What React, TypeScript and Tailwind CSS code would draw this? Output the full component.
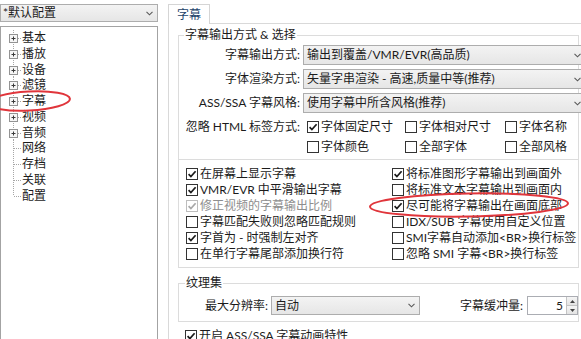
import React from "react";

function Chevron() {
  return (
    <svg width="7" height="5" viewBox="0 0 7 5" className="shrink-0">
      <path d="M0.5 0.8 L3.5 3.8 L6.5 0.8" stroke="#5a5a5a" strokeWidth="1.1" fill="none" />
    </svg>
  );
}

function Select({ text, w, h = "h-[20px]" }: { text: string; w: string; h?: string }) {
  return (
    <div
      className={`${w} ${h} shrink-0 border border-[#adadad] bg-linear-to-b from-[#f3f3f3] to-[#e6e6e6] flex items-center justify-between pl-[3px] pr-[4px] whitespace-nowrap`}
    >
      <span>{text}</span>
      <Chevron />
    </div>
  );
}

function Check({ checked, disabled, label }: { checked?: boolean; disabled?: boolean; label: string }) {
  return (
    <div className="flex items-center h-[16px] gap-[2px] whitespace-nowrap">
      <span
        className={`w-[12px] h-[12px] shrink-0 border ${disabled ? "border-[#bdbdbd]" : "border-[#333333]"} bg-white flex items-center justify-center`}
      >
        {checked && (
          <svg width="10" height="10" viewBox="0 0 10 10">
            <path
              d="M1.6 5.2 L3.9 7.6 L8.6 2.2"
              stroke={disabled ? "#a8a8a8" : "#1a1a1a"}
              strokeWidth="1.7"
              fill="none"
            />
          </svg>
        )}
      </span>
      <span className={disabled ? "text-[#8e8e8e]" : ""}>{label}</span>
    </div>
  );
}

function TreeRow({ label, expandable, last }: { label: string; expandable?: boolean; last?: boolean }) {
  return (
    <div className="flex items-center h-[15.8px]">
      <svg width="21" height="16" className="shrink-0">
        <line x1="12.5" y1="0" x2="12.5" y2={last ? 8 : 16} stroke="#a6a6a6" strokeDasharray="1 1" />
        <line x1="13" y1="8.5" x2="21" y2="8.5" stroke="#a6a6a6" strokeDasharray="1 1" />
        {expandable && (
          <>
            <rect x="8.5" y="4.5" width="8" height="8" fill="#f6f6f6" stroke="#939393" />
            <path d="M10.5 8.5 H14.5 M12.5 6.5 V10.5" stroke="#3a3a3a" />
          </>
        )}
      </svg>
      <span>{label}</span>
    </div>
  );
}

export default function App() {
  return (
    <div className="w-[581px] h-[339px] overflow-hidden bg-white relative flex text-[12px] leading-[16px] text-[#1b1b1b] font-['Lato','Noto_Sans_CJK_SC',sans-serif]">
      {/* Left column */}
      <div className="w-[158px] shrink-0 flex flex-col pt-[4px]">
        <div className="h-[20px] border border-[#adadad] bg-linear-to-b from-[#f3f3f3] to-[#e6e6e6] flex items-center justify-between pl-[2px] pr-[4px]">
          <span>*默认配置</span>
          <Chevron />
        </div>
        <div className="mt-[4px] h-[330px] shrink-0 border border-[#a3a3a3] pt-[3px] bg-white">
          <TreeRow label="基本" expandable />
          <TreeRow label="播放" expandable />
          <TreeRow label="设备" expandable />
          <TreeRow label="滤镜" expandable />
          <TreeRow label="字幕" expandable />
          <TreeRow label="视频" expandable />
          <TreeRow label="音频" expandable />
          <TreeRow label="网络" />
          <TreeRow label="存档" />
          <TreeRow label="关联" />
          <TreeRow label="配置" last />
        </div>
      </div>

      {/* Right column */}
      <div className="ml-[10px] flex flex-col flex-1 min-w-0">
        <div className="h-[23px] shrink-0 flex items-end">
          <div className="relative z-10 w-[42px] h-[20px] mb-[-1px] border border-b-0 border-[#d5d5d5] bg-white flex items-center justify-center text-[#23436b]">
            字幕
          </div>
        </div>
        <div className="flex-1 border-l border-t border-[#d9d9d9] bg-white pl-[9px] flex flex-col">
          {/* Group 1 */}
          <fieldset className="mt-[3px] w-[401px] min-w-0 shrink-0 border border-[#dcdcdc] pb-[4px]">
            <legend className="ml-[5px] px-[1px] leading-[16px]">字幕输出方式 &amp; 选择</legend>
            <div className="grid grid-cols-[121px_auto] gap-x-[3px] gap-y-[4px] mt-[2px] items-center">
              <div className="text-right whitespace-nowrap">字幕输出方式:</div>
              <Select w="w-[283px]" text="输出到覆盖/VMR/EVR(高品质)" />
              <div className="text-right whitespace-nowrap">字体渲染方式:</div>
              <Select w="w-[283px]" text="矢量字串渲染 - 高速,质量中等(推荐)" />
              <div className="text-right whitespace-nowrap">ASS/SSA 字幕风格:</div>
              <Select w="w-[283px]" text="使用字幕中所含风格(推荐)" />
            </div>
            <div className="flex mt-[6px]">
              <div className="w-[121px] shrink-0 text-right whitespace-nowrap h-[16px]">忽略 HTML 标签方式:</div>
              <div className="ml-[7px] grid grid-cols-[98px_100px_auto] gap-y-[4px]">
                <Check checked label="字体固定尺寸" />
                <Check label="字体相对尺寸" />
                <Check label="字体名称" />
                <Check label="字体颜色" />
                <Check label="全部字体" />
                <Check label="全部风格" />
              </div>
            </div>
          </fieldset>

          {/* Group 2 */}
          <div className="w-[401px] shrink-0 border border-t-0 border-[#dcdcdc] pt-[6px] pb-[5px] pl-[7px] flex">
            <div className="w-[206px] shrink-0 flex flex-col">
              <Check checked label="在屏幕上显示字幕" />
              <Check checked label="VMR/EVR 中平滑输出字幕" />
              <Check checked disabled label="修正视频的字幕输出比例" />
              <Check label="字幕匹配失败则忽略匹配规则" />
              <Check checked label="字首为 - 时强制左对齐" />
              <Check label="在单行字幕尾部添加换行符" />
            </div>
            <div className="flex flex-col">
              <Check checked label="将标准图形字幕输出到画面外" />
              <Check label="将标准文本字幕输出到画面内" />
              <Check checked label="尽可能将字幕输出在画面底部" />
              <Check label="IDX/SUB 字幕使用自定义位置" />
              <Check label="SMI字幕自动添加<BR>换行标签" />
              <Check label="忽略 SMI 字幕<BR>换行标签" />
            </div>
          </div>

          {/* Group 3 */}
          <fieldset className="mt-[7px] w-[401px] min-w-0 shrink-0 border border-[#dcdcdc] pb-[6px]">
            <legend className="ml-[6px] px-[1px] leading-[16px]">纹理集</legend>
            <div className="mt-[5px] flex items-center pl-[26px]">
              <span className="whitespace-nowrap">最大分辨率:</span>
              <div className="ml-[3px]">
                <Select w="w-[149px]" h="h-[19px]" text="自动" />
              </div>
              <span className="ml-[40px] whitespace-nowrap">字幕缓冲量:</span>
              <div className="ml-[4px] w-[55px] h-[19px] border border-[#abadb3] bg-white flex">
                <div className="flex-1 text-right pr-[3px] leading-[17px]">5</div>
                <div className="w-[11px] flex flex-col border-l border-[#c4c4c4]">
                  <div className="flex-1 bg-linear-to-b from-[#f5f5f5] to-[#e3e3e3] border-b border-[#c4c4c4] flex items-center justify-center">
                    <svg width="5" height="3" viewBox="0 0 5 3">
                      <path d="M0 3 L2.5 0 L5 3 Z" fill="#444" />
                    </svg>
                  </div>
                  <div className="flex-1 bg-linear-to-b from-[#f5f5f5] to-[#e3e3e3] flex items-center justify-center">
                    <svg width="5" height="3" viewBox="0 0 5 3">
                      <path d="M0 0 L2.5 3 L5 0 Z" fill="#444" />
                    </svg>
                  </div>
                </div>
              </div>
            </div>
          </fieldset>

          <div className="mt-[6px] ml-[7px]">
            <Check checked label="开启 ASS/SSA 字幕动画特性" />
          </div>
        </div>
      </div>

      {/* Red annotation ellipses */}
      <svg className="absolute inset-0 pointer-events-none" width="581" height="339" viewBox="0 0 581 339">
        <ellipse cx="29" cy="101" rx="41" ry="9.5" transform="rotate(-3 29 101)" fill="none" stroke="#e0353b" strokeWidth="2" />
        <ellipse cx="469" cy="205" rx="99" ry="11.5" transform="rotate(-1 469 205)" fill="none" stroke="#e0353b" strokeWidth="2" />
      </svg>
    </div>
  );
}
